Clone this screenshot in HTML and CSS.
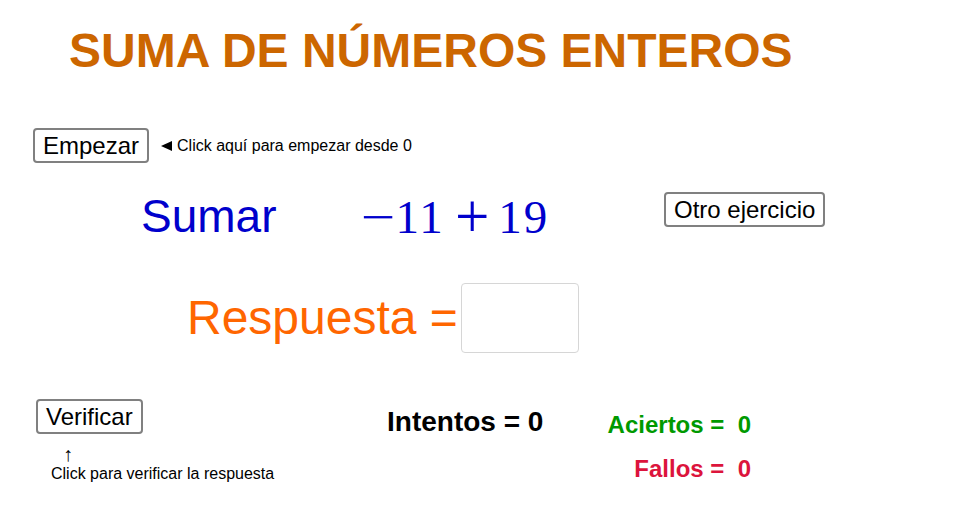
FILE: index.html
```html
<!DOCTYPE html>
<html lang="es">
<head>
<meta charset="utf-8">
<title>Suma de números enteros</title>
<link rel="stylesheet" href="styles.css">
</head>
<body>
<div class="canvas">
  <h1 class="title">SUMA DE NÚMEROS ENTEROS</h1>

  <div class="start-row">
    <button class="gg-btn">Empezar</button>
    <span class="hint"><span class="tri"></span>Click aquí para empezar desde 0</span>
  </div>

  <div class="problem-row">
    <span class="sumar">Sumar</span>
    <span class="math"><span class="op op-minus">−</span><span class="num num-a">11</span><span class="op op-plus">+</span><span class="num num-b">19</span></span>
    <button class="gg-btn btn-otro">Otro ejercicio</button>
  </div>

  <div class="answer-row">
    <span class="respuesta">Respuesta =</span>
    <input class="answer-input" type="text" aria-label="Respuesta">
  </div>

  <div class="bottom">
    <div class="col-left">
      <button class="gg-btn">Verificar</button>
      <span class="up-arrow">↑</span>
      <span class="small-note">Click para verificar la respuesta</span>
    </div>
    <div class="col-mid">
      <span class="intentos">Intentos = 0</span>
    </div>
    <div class="col-right">
      <span class="aciertos">Aciertos =  0</span>
      <span class="fallos">Fallos =  0</span>
    </div>
  </div>
</div>
</body>
</html>
```

FILE: styles.css
```css
html, body {
  margin: 0;
  padding: 0;
  background: #ffffff;
}

.canvas {
  width: 958px;
  height: 527px;
  overflow: hidden;
  font-family: "Liberation Sans", Arial, sans-serif;
  color: #000;
}

.title {
  margin: 0;
  height: 128px;
  box-sizing: border-box;
  padding: 23px 0 0 69px;
  font-size: 48px;
  line-height: 56px;
  font-weight: bold;
  color: #cc6600;
  white-space: nowrap;
}

.gg-btn {
  box-sizing: border-box;
  height: 35px;
  margin: 0;
  padding: 0 8px;
  border: 2px solid #808080;
  border-radius: 4px;
  background: #ffffff;
  color: #000;
  font-family: "Liberation Sans", Arial, sans-serif;
  font-size: 24px;
  line-height: 31px;
  white-space: nowrap;
}

/* Row: Empezar */
.start-row {
  height: 35px;
  display: flex;
  align-items: center;
  padding-left: 33px;
}

.hint {
  display: flex;
  align-items: center;
  margin-left: 12px;
  font-size: 16px;
  line-height: 18px;
  white-space: nowrap;
}

.tri {
  width: 0;
  height: 0;
  border-top: 5.5px solid transparent;
  border-bottom: 5.5px solid transparent;
  border-right: 11px solid #000;
  margin-right: 5px;
  margin-top: 1px;
}

/* Row: Sumar -11 + 19 */
.problem-row {
  height: 120px;
  display: flex;
  align-items: flex-start;
  padding-left: 141px;
}

.sumar {
  width: 136px;
  margin-top: 30px;
  font-size: 46px;
  line-height: 46px;
  color: #0000cc;
  white-space: nowrap;
}

.math {
  width: 196px;
  margin-left: 88px;
  margin-top: 32px;
  display: flex;
  align-items: baseline;
  font-family: "Liberation Serif", "Times New Roman", serif;
  font-size: 47px;
  line-height: 45px;
  color: #0000cc;
  white-space: nowrap;
}

.op {
  display: inline-block;
}

.op-minus {
  transform: scaleX(1.3);
}

.op-plus {
  margin-left: 14px;
  transform: scale(1.3, 1.35);
}

.num {
  letter-spacing: 2px;
}

.num-a { margin-left: 4px; }
.num-b { margin-left: 13px; }

.btn-otro {
  margin-left: 103px;
  margin-top: 29px;
}

/* Row: Respuesta */
.answer-row {
  height: 116px;
  display: flex;
  align-items: flex-start;
  padding-left: 187px;
}

.respuesta {
  margin-top: 11px;
  font-size: 48px;
  line-height: 48px;
  color: #ff6600;
  white-space: nowrap;
}

.answer-input {
  box-sizing: border-box;
  width: 118px;
  height: 70px;
  margin: 0 0 0 3px;
  padding: 0;
  border: 1px solid #d6d6d6;
  border-radius: 4px;
  background: #fff;
  outline: none;
}

/* Bottom block */
.bottom {
  display: grid;
  grid-template-columns: 351px 213px 151px;
  padding-left: 36px;
  align-items: start;
}

.col-left {
  display: flex;
  flex-direction: column;
  align-items: flex-start;
}

.up-arrow {
  margin-left: 27px;
  margin-top: 10px;
  font-size: 20px;
  line-height: 20px;
}

.small-note {
  margin-left: 15px;
  margin-top: 1px;
  font-size: 16px;
  line-height: 18px;
  white-space: nowrap;
}

.col-mid {
  display: flex;
}

.intentos {
  margin-top: 9px;
  font-size: 28px;
  line-height: 28px;
  font-weight: bold;
  white-space: pre;
}

.col-right {
  display: flex;
  flex-direction: column;
  align-items: flex-end;
}

.aciertos,
.fallos {
  font-size: 24px;
  line-height: 24px;
  font-weight: bold;
  white-space: pre;
}

.aciertos {
  margin-top: 14px;
  color: #009900;
}

.fallos {
  margin-top: 20px;
  color: #dc143c;
}
```
